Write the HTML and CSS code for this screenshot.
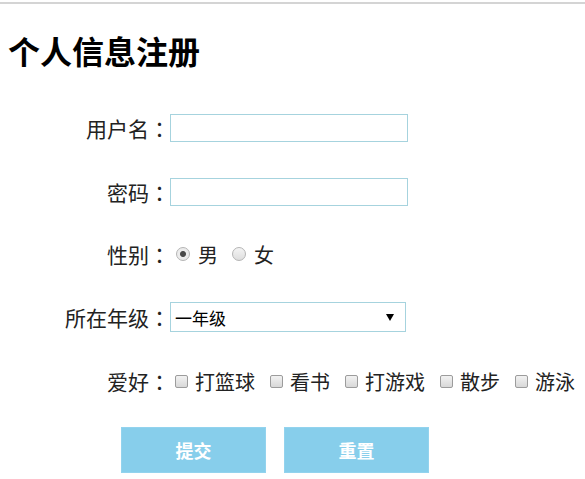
FILE: index.html
```html
<!DOCTYPE html>
<html>
<head>
	<meta charset="utf-8">
	<title>个人信息注册</title>
	<link rel="stylesheet" href="styles.css">
</head>
<body>
	<div class="page">
		<h1 class="title">个人信息注册</h1>
		<form class="reg-form">
			<div class="row">
				<label class="label" for="username">用户名<span class="colon">：</span></label>
				<input class="text-input" type="text" id="username">
			</div>
			<div class="row">
				<label class="label" for="password">密码<span class="colon">：</span></label>
				<input class="text-input" type="password" id="password">
			</div>
			<div class="row row-sex">
				<span class="label">性别<span class="colon">：</span></span>
				<input class="radio" type="radio" name="sex" id="male" checked>
				<label for="male">男</label>
				<input class="radio radio-next" type="radio" name="sex" id="female">
				<label for="female">女</label>
			</div>
			<div class="row row-grade">
				<label class="label" for="grade">所在年级<span class="colon">：</span></label>
				<span class="select-wrap">
					<select class="select" id="grade">
						<option>一年级</option>
						<option>二年级</option>
						<option>三年级</option>
						<option>四年级</option>
					</select>
				</span>
			</div>
			<div class="row row-hobby">
				<span class="label">爱好<span class="colon">：</span></span>
				<input class="check check-first" type="checkbox" id="h1"><label for="h1">打篮球</label>
				<input class="check" type="checkbox" id="h2"><label for="h2">看书</label>
				<input class="check" type="checkbox" id="h3"><label for="h3">打游戏</label>
				<input class="check" type="checkbox" id="h4"><label for="h4">散步</label>
				<input class="check" type="checkbox" id="h5"><label for="h5">游泳</label>
			</div>
			<div class="row buttons">
				<button type="submit" class="btn">提交</button>
				<button type="reset" class="btn">重置</button>
			</div>
		</form>
	</div>
</body>
</html>
```

FILE: styles.css
```css
body {
	margin: 0;
	font-family: "Noto Sans CJK SC", "Noto Sans", sans-serif;
	color: #222;
	background: #fff;
}

.page {
	margin-top: 2px;
	border-top: 2px solid #d4d4d4;
	padding: 0 8px;
}

/* title */
.title {
	font-size: 32px;
	font-weight: bold;
	color: #000;
	line-height: 46px;
	margin: 23px 0 23px 0;
}

/* form rows */
.reg-form {
	display: flex;
	flex-direction: column;
}

.row {
	display: flex;
	align-items: center;
	height: 64px;
	font-size: 20px;
}

.row-sex {
	height: 60px;
}

.row-grade {
	height: 66px;
}

.row-hobby {
	height: 62px;
}

.label {
	width: 162px;
	text-align: right;
	flex-shrink: 0;
	font-size: 21px;
}

/* centred full-width colon */
.colon {
	font-family: "Noto Sans CJK TC", sans-serif;
}

.text-input {
	width: 238px;
	height: 28px;
	box-sizing: border-box;
	border: 1px solid #a6d3de;
	margin: 0;
	padding: 0 4px;
	font-size: 16px;
	outline: none;
}

/* radios */
.radio {
	appearance: none;
	-webkit-appearance: none;
	width: 14px;
	height: 14px;
	margin: 0 8px 0 6px;
	border: 1px solid #b4b4b4;
	border-radius: 50%;
	background: linear-gradient(#f4f4f4, #dedede);
	box-sizing: border-box;
}

.radio:checked {
	background: radial-gradient(circle, #4a4a4a 0 2.5px, #ececec 3.5px);
}

.radio-next {
	margin-left: 14px;
}

/* select */
.select-wrap {
	position: relative;
	display: inline-block;
}

.select {
	appearance: none;
	-webkit-appearance: none;
	width: 236px;
	height: 30px;
	box-sizing: border-box;
	border: 1px solid #a6d3de;
	border-radius: 0;
	background: #fff;
	margin: 0;
	padding: 0 4px;
	font-family: "Noto Sans CJK SC", sans-serif;
	font-size: 17px;
	color: #000;
	outline: none;
}

.select-wrap::after {
	content: "";
	position: absolute;
	right: 12px;
	top: 12px;
	border-left: 4px solid transparent;
	border-right: 4px solid transparent;
	border-top: 7px solid #000;
	pointer-events: none;
}

/* checkboxes */
.check {
	appearance: none;
	-webkit-appearance: none;
	width: 13px;
	height: 13px;
	margin: 0 7px 0 15px;
	border: 1px solid #9c9c9c;
	border-radius: 2px;
	background: linear-gradient(#f2f2f2, #d8d8d8);
	box-sizing: border-box;
}

.check-first {
	margin-left: 5px;
}

/* buttons */
.buttons {
	height: 76px;
	padding-left: 113px;
	gap: 18px;
}

.btn {
	width: 145px;
	height: 46px;
	background-color: #87ceeb;
	border: 1px solid #93d3ee;
	color: #fff;
	font-family: "Noto Sans CJK SC", sans-serif;
	font-size: 18px;
	font-weight: bold;
	cursor: pointer;
}
```
